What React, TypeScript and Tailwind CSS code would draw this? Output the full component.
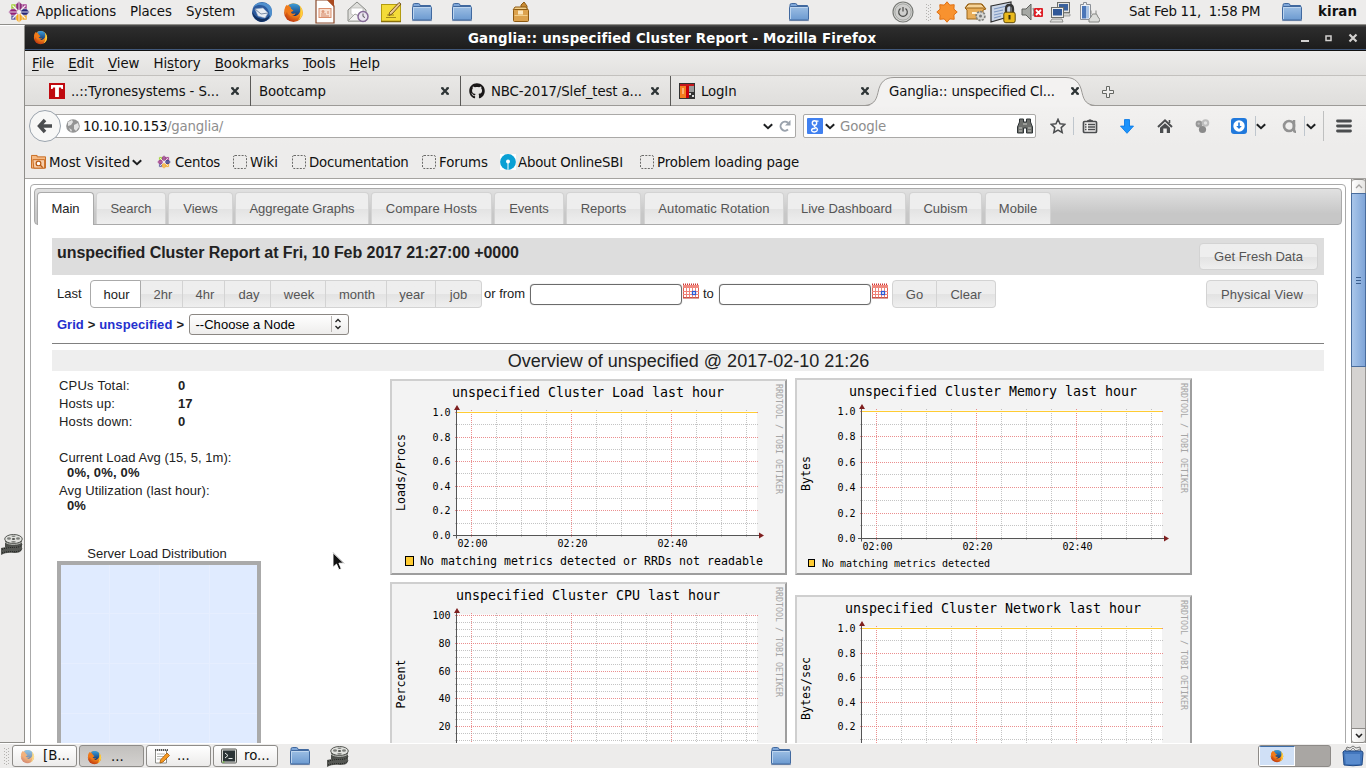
import React from "react";
import { FaGithub } from "react-icons/fa";

type P = { className?: string };

const FirefoxIcon = ({ className = "" }: P) => (
  <svg viewBox="0 0 22 22" className={`shrink-0 ${className}`}>
    <defs>
      <radialGradient id="ffo" cx="0.7" cy="0.2" r="0.95">
        <stop offset="0" stopColor="#ffd83a" />
        <stop offset="0.45" stopColor="#f58a1c" />
        <stop offset="1" stopColor="#b3260c" />
      </radialGradient>
      <linearGradient id="ffb" x1="0" y1="0" x2="0" y2="1">
        <stop offset="0" stopColor="#3d9fdc" />
        <stop offset="1" stopColor="#12346e" />
      </linearGradient>
    </defs>
    <circle cx="11" cy="11.2" r="9.8" fill="url(#ffo)" />
    <path d="M6 3.2C9 0.6 15 0.8 17.6 4.4c1.2 2 1 6-1 7.800-1.700 2.600-5.800 3.400-8 1.600C6.500 12.500 6.300 10.500 7.600 9.500L10.500 9 8 6.800z" fill="url(#ffb)" />
    <path d="M1.600 8C2 5.500 3 4 4.200 3l.6 2c1.500-.4 2.800 0 3.600.8L8 7.500l3 1.200c-.6 1.200-2 1.400-2.600 2.100.4 1.700 3 2 4.800 1.100-1 2.900-4.700 3.400-6.700 1.800C4.500 12.200 4.300 10 4.300 10L2 14z" fill="#f07a1a" />
    <path d="M17.500 4.200c2.500 2.500 3.600 6 2.900 9-.8 3.200-2.600 5.300-5 6.500 2.300-2.700 2.900-5 2.700-7.500.5-2.500.4-5.500-.6-8z" fill="#ffd23c" />
  </svg>
);

const FolderIcon = ({ className = "" }: P) => (
  <svg viewBox="0 0 22 20" className={`h-[20px] w-[22px] shrink-0 ${className}`}>
    <defs>
      <linearGradient id="fold" x1="0" y1="0" x2="0" y2="1">
        <stop offset="0" stopColor="#9dbfe4" />
        <stop offset="1" stopColor="#6c9ad0" />
      </linearGradient>
    </defs>
    <path d="M2 6V3q0-1.500 1.500-1.500h4Q9 1.500 9 3.500h10.500v5H2z" fill="#7ea6d8" stroke="#41699f" />
    <rect x="1.500" y="4.500" width="19" height="13.500" rx="1" fill="url(#fold)" stroke="#41699f" />
    <path d="M2.500 5.500h17M2.500 5.500v11.500" stroke="#c3d9f1" fill="none" strokeWidth=".9" />
    <path d="M1 18.600h20" stroke="#2a4d80" strokeOpacity=".5" />
  </svg>
);

const CentosIcon = ({ className = "" }: P) => (
  <svg viewBox="0 0 22 22" className={`shrink-0 ${className}`}>
    <g stroke="#f5f3f4" strokeWidth=".6">
      <path d="M3 3h7.500v7.500H3z" fill="#9ccd2a" />
      <path d="M11.500 3H19v7.500h-7.500z" fill="#a0368a" />
      <path d="M3 11.500h7.500V19H3z" fill="#5b58a0" />
      <path d="M11.500 11.500H19V19h-7.500z" fill="#efa724" />
      <path d="M11 .3l3.200 3.200v4L11 10.500 7.800 7.500v-4z" fill="#8a2a78" />
      <path d="M21.700 11l-3.200 3.200h-4L11.500 11l3-3.200h4z" fill="#262577" />
      <path d="M11 21.700l-3.200-3.200v-4l3.200-3 3.200 3v4z" fill="#f5a81f" />
      <path d="M.3 11l3.200-3.200h4l3 3.200-3 3.200h-4z" fill="#932279" />
      <path d="M11 .3v21.400M.3 11h21.400" stroke="#f0edf2" strokeWidth=".9" />
      <path d="M4.500 4.500l4.500 4.500M17.500 4.500L13 9M4.500 17.500L9 13M17.500 17.500L13 13" strokeWidth="1.300" />
    </g>
    <path d="M11 8.500l2.500 2.500L11 13.500 8.500 11z" fill="#f3eef3" />
  </svg>
);

const FilmIcon = ({ className = "" }: P) => (
  <svg viewBox="0 0 22 21" className={`h-[21px] w-[22px] shrink-0 ${className}`}>
    <path d="M4 5v8c3 3 14 3 17 0V5z" fill="#4c4e4a" />
    <path d="M0 14c5-1 9-2 13-2 5 0 8-2 8-4v6c0 4-3 5-8 5-6-.5-9 0-13 2z" fill="#555753" />
    <path d="M1 15.300c5-1.800 9-1.800 13-2 4 0 6-1 7-2.800M1 19c5-1.800 9-1.300 13-1.300 3 0 6-1 7-3" fill="none" stroke="#1e1f1d" strokeDasharray="1 1" />
    <ellipse cx="12.500" cy="5" rx="8.800" ry="4.500" fill="#e1e2de" stroke="#555753" />
    <ellipse cx="12.500" cy="5" rx="1.700" ry="1" fill="#555753" />
    <ellipse cx="8" cy="4.500" rx="2" ry="1.200" fill="#7d7f7b" />
    <ellipse cx="17" cy="4.500" rx="2" ry="1.200" fill="#7d7f7b" />
    <ellipse cx="12.500" cy="2.300" rx="2" ry=".8" fill="#7d7f7b" />
    <ellipse cx="12.500" cy="7.800" rx="2.300" ry=".9" fill="#7d7f7b" />
    <path d="M4 8c3 3 13 3.500 17 0" fill="none" stroke="#b9bbb6" />
  </svg>
);

const Chevron = ({ className = "" }: P) => (
  <svg viewBox="0 0 10 7" className={`h-[7px] w-[10px] shrink-0 ${className}`}>
    <path d="M0.800 1.200L5 5.200 9.200 1.200" fill="none" stroke="#1d1f21" strokeWidth="2" />
  </svg>
);

const CloseX = ({ className = "" }: P) => (
  <svg viewBox="0 0 10 10" className={`mt-px h-[10px] w-[10px] shrink-0 ${className}`}>
    <path d="M2 2L8 8M8 2L2 8" stroke="#2e3436" strokeWidth="2.300" />
    <path d="M1 2h2.500M6.500 2H9M1 8h2.500M6.500 8H9" stroke="#2e3436" strokeWidth="1.600" />
  </svg>
);

const Dotted = ({ className = "" }: P) => (
  <svg viewBox="0 0 14 14" className={`h-[14px] w-[14px] shrink-0 ${className}`}>
    <rect x=".5" y=".5" width="13" height="13" rx="1.500" fill="none" stroke="#6a6a68" strokeDasharray="2 1.300" />
  </svg>
);

const Grip = ({ className = "" }: P) => (
  <svg viewBox="0 0 5 17" className={`h-[17px] w-[5px] shrink-0 ${className}`}>
    <path d="M.5 0v17M4.500 0v17M2.500 1v16" stroke="#b5b3b0" strokeDasharray="1 2" />
  </svg>
);

const TopPanel = () => (
  <div className="flex h-[25px] shrink-0 items-center border-b border-[#8f8e8a] bg-[#edeceb]">
    <CentosIcon className="ml-[8px] h-[22px] w-[22px]" />
    <span className="ml-[6px] w-[94px] tracking-[-0.12px]">Applications</span>
    <span className="w-[56px] tracking-[-0.1px]">Places</span>
    <span className="w-[65px] tracking-[-0.1px]">System</span>
    <svg viewBox="0 0 22 22" className="h-[22px] w-[22px] shrink-0">
      <circle cx="11" cy="11" r="10" fill="#2c5a9e" />
      <path d="M2 6C6 0 16 0 20 6c2 5 1 9-2 12C20 11 16 4 9 4 6 4 4 5 2 6z" fill="#4f8fcd" />
      <path d="M4 8l8-1 5 5-3 5-7-2z" fill="#e8edf4" stroke="#98abc4" strokeWidth=".6" />
      <path d="M4 8l6 5 7-1" fill="none" stroke="#7b8da8" />
      <path d="M1 11c1 6 5 9 9 10 5 0 8-3 9-7-3 4-8 5-11 3-4-1-5-4-7-6z" fill="#12305f" />
    </svg>
    <FirefoxIcon className="ml-[10px] h-[21px] w-[21px]" />
    <svg viewBox="0 0 20 24" className="ml-[11px] h-[24px] w-[20px] shrink-0">
      <path d="M1 0h12l6 6v17H1z" fill="#fff" stroke="#8a4a2c" strokeWidth="1.200" />
      <path d="M12 0l7 7V0z" fill="#aa4a20" />
      <rect x="4" y="8.500" width="12" height="9" fill="#f8dfd0" stroke="#d98d6c" />
      <path d="M6 14h5M6 16h8M13 14V11" stroke="#d4886a" />
      <circle cx="8" cy="11.500" r="1.500" fill="#dd9a7c" />
    </svg>
    <svg viewBox="0 0 22 22" className="ml-[12px] h-[22px] w-[22px] shrink-0">
      <path d="M1 9L10 1l9 8v11H1z" fill="#dededb" stroke="#8a8c88" />
      <path d="M4 7h12v6l-6 3-6-3z" fill="#fff" stroke="#b5b5b2" strokeWidth=".7" />
      <path d="M1 20l7-7 2 1 9 6z" fill="#f5f5f4" stroke="#a3a4a0" />
      <circle cx="16" cy="15.500" r="5" fill="#eae4ef" stroke="#856a97" strokeWidth="1.500" />
      <path d="M16 12.500v3l2 1" fill="none" stroke="#555" />
    </svg>
    <svg viewBox="0 0 22 22" className="ml-[11px] h-[22px] w-[22px] shrink-0">
      <rect x="1.500" y="3.500" width="19" height="17" fill="#f4dc39" stroke="#b39c10" />
      <path d="M1 20.500h20" stroke="#886f0a" strokeWidth="1.500" />
      <path d="M7 14h7M6 16.500h10" stroke="#a38b19" />
      <path d="M19 1.500l2 1.500-9 10-3 1.500.5-3z" fill="#e9c78f" stroke="#6b4b13" strokeWidth=".9" />
    </svg>
    <FolderIcon className="ml-[9px]" />
    <FolderIcon className="ml-[18px]" />
    <svg viewBox="0 0 18 22" className="ml-[39px] h-[22px] w-[18px] shrink-0">
      <path d="M9 9V4l3-3 3 4v4" fill="#c88a34" stroke="#8d5a12" />
      <path d="M1 9l2-3h11l2 3z" fill="#f2cf8a" stroke="#8d5a12" />
      <rect x="1.500" y="8.500" width="15" height="12" rx="1" fill="#dca24d" stroke="#8d5a12" />
      <path d="M6 9.500v4h5v-4z" fill="#fbe6bd" />
      <path d="M2.500 14.500h13" stroke="#f2cf8a" />
    </svg>
    <FolderIcon className="ml-[258px]" />
    <svg viewBox="0 0 22 22" className="ml-[82px] h-[22px] w-[22px] shrink-0">
      <circle cx="11" cy="11" r="10" fill="#dcdcda" stroke="#787a76" strokeWidth="1.200" />
      <circle cx="11" cy="11" r="8.200" fill="#cfcfcd" stroke="#a3a5a1" />
      <path d="M8.500 7.500a4.300 4.300 0 1 0 5 0M11 6v4.500" fill="none" stroke="#4a4b49" strokeWidth="1.200" />
    </svg>
    <Grip className="ml-[12px]" />
    <svg viewBox="0 0 22 22" className="ml-[5px] h-[22px] w-[22px] shrink-0">
      <path d="M11 .8l2.800 3.300 4.400-.4-.3 4.400L21.200 11l-3.300 2.900.3 4.400-4.400-.4L11 21.200 8.200 17.900l-4.400.4.3-4.400L.8 11l3.300-2.900-.3-4.400 4.400.4z" fill="#f8922f" stroke="#e07114" />
    </svg>
    <svg viewBox="0 0 23 20" className="ml-[6px] h-[20px] w-[23px] shrink-0">
      <path d="M4 2h14l4 5-3 1v9H3V8L1 6z" fill="#e8ad58" stroke="#9a6418" />
      <path d="M1 6l4-4h12l4 4z" fill="#f6d398" stroke="#9a6418" />
      <path d="M8 10h7v2H8z" fill="#fff2d8" />
      <circle cx="16.500" cy="14" r="4" fill="#d6d7d4" stroke="#7f817d" strokeWidth="2.500" strokeDasharray="2 1" />
      <circle cx="16.500" cy="14" r="3.500" fill="#d6d7d4" />
      <circle cx="16.500" cy="14" r="1.500" fill="#777" />
    </svg>
    <svg viewBox="0 0 26 23" className="ml-[3px] h-[23px] w-[26px] shrink-0">
      <path d="M1 5l20-4v14L1 21z" fill="#cbd6e6" stroke="#2e2e2e" strokeWidth="1.200" />
      <path d="M4 8l13-3M4 11l9-2M4 14l9-2M4 17l7-2" stroke="#7d97c2" strokeWidth="1.100" />
      <path d="M16 12V8q0-4 3.500-4T23 8v4" fill="none" stroke="#353535" strokeWidth="2.300" />
      <rect x="13.800" y="11.200" width="11.400" height="10.500" rx="2" fill="#e9b91c" stroke="#5d4808" />
      <path d="M19.500 14v4.500" stroke="#3c2f05" strokeWidth="2" />
    </svg>
    <svg viewBox="0 0 22 20" className="ml-[5px] h-[20px] w-[22px] shrink-0">
      <path d="M1 7h4l5-5v16l-5-5H1z" fill="#a6a8a4" stroke="#5f615d" />
      <path d="M12 6q2 4 0 8" fill="none" stroke="#8a8c88" strokeWidth="1.300" />
      <rect x="13" y="6" width="9" height="9" rx="1" fill="#dd1f26" />
      <path d="M15 8l5 5M20 8l-5 5" stroke="#fff" strokeWidth="1.800" />
    </svg>
    <svg viewBox="0 0 22 22" className="ml-[6px] h-[22px] w-[22px] shrink-0">
      <rect x="8.500" y="1.500" width="12" height="10" fill="#e4e4e2" stroke="#6d6f6b" />
      <rect x="10" y="3" width="9" height="6.500" fill="#39619d" />
      <path d="M12 15h9v-2l-2-1h-5z" fill="#d4d5d2" stroke="#8b8d89" strokeWidth=".7" />
      <rect x="2.500" y="6.500" width="12" height="10" fill="#eeeeec" stroke="#6d6f6b" />
      <rect x="4" y="8" width="9" height="6.500" fill="#2f5797" />
      <path d="M1 21h13l-1-3H3z" fill="#dedfdc" stroke="#7d7f7b" strokeWidth=".8" />
    </svg>
    <svg viewBox="0 0 22 22" className="ml-[7px] h-[22px] w-[22px] shrink-0">
      <path d="M2.500 3.500h3v-2h3v2h4v15h-10z" fill="#eef1f5" stroke="#8c9097" />
      <rect x="4" y="5" width="4" height="12.500" fill="#4a76b8" />
      <rect x="8" y="5" width="3" height="12.500" fill="#a9c3e4" />
      <path d="M13 13V9.500M18 13V9.500M11 21q-1-3 2-5l1.500-3h4l1.500 3q3 2 1 5z" fill="#dddedb" stroke="#858783" />
    </svg>
    <span className="ml-[29px] w-[152px] whitespace-pre tracking-[-0.3px]">Sat Feb 11,  1:58 PM</span>
    <FolderIcon />
    <span className="ml-[15px] font-bold tracking-[0.1px]">kiran</span>
  </div>
);

const TitleBar = () => (
  <div className="flex h-[26px] shrink-0 items-center border-b border-[#111] bg-linear-to-b from-[#50504f] via-[#2d2d2d] via-10% to-[#1c1c1c] shadow-[inset_0_-1px_0_#41587a]">
    <FirefoxIcon className="ml-[8px] h-[15px] w-[15px]" />
    <span className="ml-[420px] mt-[2px] w-[832px] font-bold tracking-[0.18px] text-white">Ganglia:: unspecified Cluster Report - Mozilla Firefox</span>
    <svg viewBox="0 0 58 12" className="h-[12px] w-[58px] shrink-0">
      <path d="M1 9h8" stroke="#d3d1cf" strokeWidth="2" />
      <rect x="26" y="4" width="5" height="4.500" fill="none" stroke="#d3d1cf" strokeWidth="1.500" />
      <path d="M49.500 2.500l7 7M56.500 2.500l-7 7" stroke="#d3d1cf" strokeWidth="2.200" />
    </svg>
  </div>
);

const menus = [["F", "ile", ""], ["E", "dit", ""], ["V", "iew", ""], ["s", "tory", "Hi"], ["B", "ookmarks", ""], ["T", "ools", ""], ["H", "elp", ""]];

const MenuBar = () => (
  <div className="flex h-[25px] shrink-0 items-center gap-[14px] border-b border-[#c3c1be] bg-linear-to-b from-[#edeceb] to-[#e3e2e0] pl-[7px] tracking-[-0.03px] [&>span]:mt-[2px]">
    {menus.map(([u, rest, pre]) => (
      <span key={pre + u + rest}>
        {pre}
        <span className="underline decoration-1 underline-offset-2">{u}</span>
        {rest}
      </span>
    ))}
  </div>
);

const TabStrip = () => (
  <div className="relative flex h-[30px] shrink-0 items-center border-b border-[#9c9a97] bg-linear-to-b from-[#e9e8e6] to-[#dfdedc]">
    <div className="flex h-[30px] w-[226px] items-center border-r border-[#5b5a58] pl-[24px]">
      <svg viewBox="0 0 16 16" className="h-[16px] w-[16px] shrink-0">
        <path d="M0 0h16v16H0z" fill="#c00a10" />
        <path d="M2 2h12v4h-1.500l-.7-1.500H9.900V14H6.100V4.500H4.200L3.500 6H2z" fill="#fff" />
      </svg>
      <span className="ml-[6px] mt-[2px] w-[159px] tracking-[-0.12px]">..::Tyronesystems - S...</span>
      <CloseX />
    </div>
    <div className="flex h-[30px] w-[210px] items-center border-r border-[#5b5a58] pl-[8px]">
      <span className="mt-[2px] w-[181px] tracking-[-0.1px]">Bootcamp</span>
      <CloseX />
    </div>
    <div className="flex h-[30px] w-[210px] items-center border-r border-[#5b5a58] pl-[8px]">
      <FaGithub className="h-[16px] w-[16px] shrink-0 text-[#191717]" />
      <span className="ml-[6px] mt-[2px] w-[159px] tracking-[-0.13px]">NBC-2017/Slef_test a...</span>
      <CloseX />
    </div>
    <div className="flex h-[30px] w-[200px] items-center pl-[8px]">
      <svg viewBox="0 0 16 16" className="h-[16px] w-[16px] shrink-0">
        <path d="M0 0h16v16H0z" fill="#333" />
        <path d="M1 1h14v3H1z" fill="#c4161c" />
        <path d="M1 3h6v12H1z" fill="#f47d20" />
        <path d="M3 5h2v6H3z" fill="#ffb071" />
        <path d="M7 3h3v12H7z" fill="#c9000b" />
        <path d="M10 3h5v6h-5z" fill="#9b9b9b" />
        <path d="M10 10h2v2h-2zM13 12h2v2h-2z" fill="#ddd" />
      </svg>
      <span className="ml-[6px] mt-[2px] w-[159px] tracking-[-0.15px]">LogIn</span>
      <CloseX />
    </div>
    <div className="flex h-[30px] items-center pl-[18px]">
      <span className="z-10 mt-[2px] w-[181px] tracking-[-0.18px]">Ganglia:: unspecified Cl...</span>
      <CloseX className="z-10" />
    </div>
    <svg viewBox="0 0 12 12" className="ml-[22px] mt-[2px] h-[12px] w-[12px] shrink-0">
      <path d="M4.500 .5h3v4h4v3h-4v4h-3v-4h-4v-3h4z" fill="#f0efee" stroke="#666864" />
    </svg>
    <svg viewBox="0 0 240 31" className="absolute left-[838px] top-[0px] h-[31px] w-[240px]">
      <path d="M2 30.500c8-1 11-5 13-14C17 6 22 1.500 31 1.500H203c9 0 14 5 16 15 2 9 5 13 13 14z" fill="#f3f2f1" />
      <path d="M2 29.500c8-1 11-4 13-13C17 6 22 1.500 31 1.500H203c9 0 14 5 16 15 2 9 5 12 13 13" fill="none" stroke="#9c9a97" />
    </svg>
  </div>
);

const NavBar = () => (
  <div className="flex h-[40px] shrink-0 items-center bg-linear-to-b from-[#f2f1f0] to-[#edeceb]">
    <svg viewBox="0 0 32 32" className="z-10 ml-[4px] h-[32px] w-[32px] shrink-0">
      <circle cx="16" cy="16" r="15.500" fill="#f7f7f6" stroke="#9aa3ad" />
      <path d="M10.500 16H23M16 10L10.500 16l5.500 6" fill="none" stroke="#4b4d4f" strokeWidth="3.500" />
    </svg>
    <div className="-ml-[14px] flex h-[24px] w-[749px] items-center rounded-[2px] border border-[#aaa9a7] bg-white pl-[18px]">
      <svg viewBox="0 0 14 14" className="h-[14px] w-[14px] shrink-0">
        <circle cx="7" cy="7" r="6.800" fill="#949494" />
        <path d="M2 3l4-2 1 2-2 3-3 1zM8 6l4-2 1 4-3 4-2-2zM3 9l3 2-1 2z" fill="#e3e3e3" />
      </svg>
      <span className="ml-[3px] mt-[2px] w-[680px] tracking-[-0.42px]">
        10.10.10.153<span className="tracking-[-0.22px] text-[#8e8e8e]">/ganglia/</span>
      </span>
      <Chevron />
      <svg viewBox="0 0 12 12" className="ml-[6px] h-[12px] w-[12px] shrink-0">
        <path d="M9 9.600A4.500 4.500 0 1 1 9 2.800" fill="none" stroke="#9aa2ac" strokeWidth="2" />
        <path d="M11.500 0v5.500H6z" fill="#9aa2ac" />
      </svg>
    </div>
    <div className="ml-[7px] flex h-[24px] w-[233px] items-center rounded-[2px] border border-[#aaa9a7] bg-white pl-[3px]">
      <svg viewBox="0 0 16 16" className="h-[16px] w-[16px] shrink-0">
        <rect width="16" height="16" rx="1" fill="#4080f0" />
        <circle cx="7.500" cy="5" r="2.200" fill="none" stroke="#fff" strokeWidth="1.400" />
        <path d="M9 3.200h2.500M8 7.500c-2 1 .8 1.800 2 3 1.500 2-1 3.700-3 3.500-3-.2-3.300-3-.5-3.500h2" fill="none" stroke="#fff" strokeWidth="1.300" />
      </svg>
      <Chevron className="ml-[2px]" />
      <span className="ml-[5px] mt-[2px] w-[177px] tracking-[-0.15px] text-[#8e8e8e]">Google</span>
      <svg viewBox="0 0 16 16" className="h-[16px] w-[16px] shrink-0">
        <path d="M2.500 1h4v3h3V1h4v3l2 5v6h-6v-5h-3v5h-6V9l2-5z" fill="#6e706d" stroke="#2e3436" />
        <path d="M2 10h3M11 10h3M2 13h3M11 13h3M6 6h4" stroke="#c9cbc7" />
      </svg>
    </div>
    <svg viewBox="0 0 16 16" className="ml-[14px] h-[16px] w-[16px] shrink-0">
      <path d="M8 1.300l2 4.500 4.800.5-3.600 3.300 1 4.900L8 12l-4.200 2.500 1-4.900L1.200 6.300 6 5.800z" fill="#f3f2f1" stroke="#4b4d4f" strokeWidth="1.500" />
    </svg>
    <div className="ml-[7px] h-[18px] w-px bg-[#bfc6cd]" />
    <svg viewBox="0 0 16 16" className="ml-[8px] h-[16px] w-[16px] shrink-0">
      <path d="M5 3h1.500a1.600 1.600 0 0 1 3 0H11" fill="#4b4d4f" stroke="#4b4d4f" strokeWidth="1.500" />
      <rect x="1.500" y="3.500" width="13" height="11" rx="1" fill="#f3f2f1" stroke="#4b4d4f" strokeWidth="1.700" />
      <path d="M3 6.500h1.500M6 6.500h7M3 9h1.500M6 9h7M3 11.500h1.500M6 11.500h7" stroke="#4b4d4f" strokeWidth="1.400" />
    </svg>
    <svg viewBox="0 0 14 15" className="ml-[22px] h-[15px] w-[14px] shrink-0">
      <path d="M4.500 .6h5v6.500h4L7 14.300.5 7.100h4z" fill="#1c93fb" stroke="#0a7ae6" strokeWidth=".9" />
    </svg>
    <svg viewBox="0 0 16 16" className="ml-[23px] h-[16px] w-[16px] shrink-0">
      <path d="M1 9l7-6.700L15 9" fill="none" stroke="#4b4d4f" strokeWidth="2" />
      <path d="M3 9.800l5-4.600 5 4.600V15H9.800v-4.500H6.300V15H3z" fill="#4b4d4f" />
      <path d="M11.700 2h1.600v3h-1.600z" fill="#4b4d4f" />
    </svg>
    <svg viewBox="0 0 15 15" className="ml-[22px] h-[15px] w-[15px] shrink-0">
      <circle cx="4" cy="5" r="3.400" fill="#979797" />
      <circle cx="10.500" cy="4" r="3.800" fill="#bdbdbd" />
      <circle cx="10.500" cy="4" r="1.700" fill="#e2e2e2" />
      <circle cx="7.500" cy="10.500" r="3.600" fill="#8a8a8a" />
      <circle cx="3.700" cy="4.600" r="1.200" fill="#bbb" />
    </svg>
    <svg viewBox="0 0 16 16" className="ml-[21px] h-[16px] w-[16px] shrink-0">
      <rect width="16" height="16" rx="3" fill="#2179dc" />
      <circle cx="8" cy="8" r="5.700" fill="#fff" />
      <path d="M7.200 4.500h1.600V8h2L8 11 5.200 8h2z" fill="#2179dc" />
    </svg>
    <div className="ml-[8px] h-[20px] w-px bg-[#bfc6cd]" />
    <Chevron />
    <svg viewBox="0 0 16 14" className="ml-[16px] h-[14px] w-[16px] shrink-0">
      <circle cx="7" cy="7" r="5" fill="none" stroke="#929292" strokeWidth="2.600" />
      <path d="M12 1v10.500q0 1.300 2 1.300" fill="none" stroke="#929292" strokeWidth="2.500" />
    </svg>
    <div className="ml-[6px] h-[20px] w-px bg-[#bfc6cd]" />
    <Chevron className="ml-px" />
    <div className="ml-[7px] h-[30px] w-px bg-[#bfc0c0]" />
    <svg viewBox="0 0 16 14" className="ml-[12px] h-[14px] w-[16px] shrink-0">
      <path d="M1.500 2h13M1.500 7h13M1.500 12h13" stroke="#4b4d4f" strokeWidth="2.800" strokeLinecap="round" />
    </svg>
  </div>
);

const BookmarksBar = () => (
  <div className="flex h-[33px] shrink-0 items-center border-b border-[#a5a3a0] bg-[#edeceb] [&>span]:mt-[2px]">
    <svg viewBox="0 0 16 16" className="ml-[6px] h-[16px] w-[15px] shrink-0">
      <path d="M.5 2.500V1h6v1.500h9v12H.5z" fill="#f5b983" stroke="#c5671c" />
      <path d="M3 14.500L2 5.500h12.500v9z" fill="#f7ceaa" stroke="#c5671c" />
      <circle cx="8" cy="9.500" r="2.500" fill="#fff" stroke="#b85a12" strokeWidth="1.300" />
      <path d="M10 11.500l2.500 2.500" stroke="#b85a12" strokeWidth="1.500" />
    </svg>
    <span className="ml-[3px] w-[83px]">Most Visited</span>
    <Chevron />
    <CentosIcon className="ml-[15px] h-[14px] w-[14px]" />
    <span className="ml-[4px] w-[58px] tracking-[-0.2px]">Centos</span>
    <Dotted />
    <span className="ml-[3px] w-[42px]">Wiki</span>
    <Dotted />
    <span className="ml-[3px] w-[113px] tracking-[-0.25px]">Documentation</span>
    <Dotted />
    <span className="ml-[3px] w-[61px] tracking-[-0.05px]">Forums</span>
    <svg viewBox="0 0 16 16" className="h-[16px] w-[16px] shrink-0">
      <path d="M0 0h16v16H0z" fill="#fff" />
      <circle cx="8" cy="8" r="7.900" fill="#0aa0d4" />
      <circle cx="8" cy="7.500" r="2" fill="#fff" />
      <path d="M7.500 8h1v8h-1z" fill="#fff" />
    </svg>
    <span className="ml-[2px] w-[122px] tracking-[-0.22px]">About OnlineSBI</span>
    <Dotted />
    <span className="ml-[3px] tracking-[-0.16px]">Problem loading page</span>
  </div>
);

const btn = "flex items-center justify-center border border-[#d3d3d3] bg-linear-to-b from-[#eeeeee] from-50% via-[#e3e3e3] via-52% to-[#efefef] text-[#555]";

const pageTabs = [
  ["Search", "w-[70px] ml-[2px]"], ["Views", "w-[65px] ml-[2px]"], ["Aggregate Graphs", "w-[134px] ml-[2px] tracking-[-0.08px]"],
  ["Compare Hosts", "w-[121px] ml-[2px] tracking-[0.08px]"], ["Events", "w-[70px] ml-[2px]"], ["Reports", "w-[75px] ml-[2px]"],
  ["Automatic Rotation", "w-[140px] ml-[3px] tracking-[0.08px]"], ["Live Dashboard", "w-[119px] ml-[3px]"], ["Cubism", "w-[73px] ml-[3px]"],
  ["Mobile", "w-[66px] ml-[3px]"],
];

const ranges = [
  ["2hr", "w-[42px] pl-[3px]"], ["4hr", "w-[42px] pl-[3px]"], ["day", "w-[46px] pl-[3px]"], ["week", "w-[55px] pl-[2px]"],
  ["month", "w-[61px] pl-[2px]"], ["year", "w-[49px] pl-[2px]"], ["job", "w-[46px] rounded-r-[4px]"],
];

const Calendar = () => (
  <svg viewBox="0 0 16 16" className="mb-[6px] ml-px h-[16px] w-[16px] shrink-0">
    <path d="M0 1.500h16" stroke="#c33" strokeWidth="2" strokeDasharray="1 1" />
    <rect x=".5" y="2.500" width="15" height="12" fill="#fff" stroke="#e06052" />
    <path d="M0 2h16v3H0z" fill="#f08a80" />
    <path d="M3.500 5v10M6.500 5v10M9.500 5v10M12.500 5v10M0 8.500h16M0 11.500h16" stroke="#ef8379" />
    <path d="M0 15h16" stroke="#b74238" />
    <rect x="9.500" y="8.500" width="3" height="3" fill="#fff" stroke="#2a5ad7" strokeWidth="1.300" />
  </svg>
);

type Line = [number, string?];
type ChartProps = {
  top: number; height: number; title: string; titleY: number; yLabel: string; yMid: number;
  lines: Line[]; baseY: number; markY: number; series?: boolean; timeY?: number; legend?: { text: string; x: number; y: number; size: number; adv: number; box: number };
  className?: string;
};

const mono = '"DejaVu Sans Mono", monospace';

const Chart = ({ top, height, title, titleY, yLabel, yMid, lines, baseY, markY, series, timeY, legend, className = "" }: ChartProps) => {
  const y0 = lines[0][0];
  const cols = Array.from({ length: 12 }, (_, i) => 471.5 + i * 25);
  return (
    <svg viewBox={`390 ${top} 397 ${height}`} width="397" height={height} className={`block shrink-0 ${className}`} fontFamily={mono}>
      <rect x="390" y={top} width="397" height={height} fill="#f3f3f3" />
      <path d={`M390 ${top + height}V${top}H787l-2 2H392V${top + height - 2}z`} fill="#cfcfcf" />
      <path d={`M787 ${top}V${top + height}H390l2-2H785V${top + 2}z`} fill="#9e9e9e" />
      <rect x="457" y={y0 - 1} width="300" height={baseY - y0 + 1} fill="#fff" />
      {cols.map((x, i) => (
        <path key={x} d={`M${x} ${y0 - 2.5}V${baseY + 2}`} stroke={i % 4 === 0 ? "#e46a6a" : "#9c9c9c"} strokeOpacity={i % 4 === 0 ? 0.75 : 0.6} strokeDasharray="1 1" />
      ))}
      {lines.map(([y, label]) => (
        <g key={y}>
          <path d={`M455 ${y}H759`} stroke={label ? "#e46a6a" : "#9c9c9c"} strokeOpacity={label ? 0.75 : 0.6} strokeDasharray="1 1" />
          {label && <text x="450.500" y={y + 3.500} textAnchor="end" fontSize="10" textLength={label.length * 6}>{label}</text>}
        </g>
      ))}
      {series && <path d={`M457 ${y0}H757`} stroke="#ffcc33" />}
      <path d={`M456.500 ${y0 - 3}V${baseY + 3}M453 ${baseY}H760`} stroke="#555" />
      <path d={`M454 ${y0 - 2.500}h6l-3-5z`} fill="#7f1f1f" />
      <path d={`M759 ${baseY - 3}v6l5-3z`} fill="#7f1f1f" />
      <text x={588 - title.length * 4} y={titleY} fontSize="13.300" textLength={title.length * 8}>{title}</text>
      <text transform={`translate(404.500 ${yMid + yLabel.length * 3.500}) rotate(-90)`} fontSize="11.600" textLength={yLabel.length * 7}>{yLabel}</text>
      <text transform={`translate(776 ${markY}) rotate(90)`} fontSize="8.300" textLength="110" fill="#a5a5a5">RRDTOOL / TOBI OETIKER</text>
      {timeY && ["02:00", "02:20", "02:40"].map((t, i) => (
        <text key={t} x={457.5 + i * 100} y={timeY} fontSize="10" textLength="30">{t}</text>
      ))}
      {legend && (
        <g>
          <rect x={legend.x - 14.5 + (legend.box === 7 ? 1 : 0)} y={legend.y - 8.500 + (legend.box === 7 ? 1 : 0)} width={legend.box - 1} height={legend.box} fill="#ffcc33" stroke="#000" />
          <text x={legend.x} y={legend.y} fontSize={legend.size} textLength={legend.text.length * legend.adv}>{legend.text}</text>
        </g>
      )}
    </svg>
  );
};

const cpuLines: Line[] = [
  [615.5, "100"], [622.5], [629.5], [636.5], [643.5, "80"], [650.5], [657.5], [664.5], [671.5, "60"], [678.5], [684.5], [691.5],
  [698.5, "40"], [705.5], [712.5], [719.5], [726.5, "20"], [733.5], [740.5],
];

const Page = () => (
  <div className="flex h-[564px] overflow-hidden bg-white font-['Liberation_Sans',Arial,sans-serif] text-[13px] text-[#222]">
    <div className="h-[564px] w-[1326px] shrink-0 overflow-hidden pl-[5px] pt-[5px]">
      <div className="h-[620px] w-[1316px] rounded-[4px] border border-[#aaa] p-[3px]">
        <div className="flex h-[37px] items-end rounded-[4px] border border-[#aaa] bg-linear-to-b from-[#e1e1e1] to-[#c7c7c7] to-70% pl-[2px]">
          <div className="-mb-px flex h-[33px] w-[57px] items-center justify-center rounded-t-[4px] border border-b-0 border-[#aaa] bg-white text-[#212121]">Main</div>
          {pageTabs.map(([t, c]) => (
            <div key={t} className={`${btn} h-[32px] rounded-t-[4px] border-b-0 ${c}`}>{t}</div>
          ))}
        </div>
        <div className="mx-[18px] mt-[13px]">
          <div className="flex h-[37px] justify-between bg-[#ddd] pl-[5px] pr-[6px]">
            <span className="mt-[4px] text-[16px] font-bold leading-[22px] tracking-[-0.06px]">unspecified Cluster Report at Fri, 10 Feb 2017 21:27:00 +0000</span>
            <div className={`${btn} mt-[5px] h-[27px] w-[119px] rounded-[4px]`}>Get Fresh Data</div>
          </div>
          <div className="mt-[5px] flex h-[28px] items-center pl-[5px]">
            <span className="w-[33px]">Last</span>
            <div className="flex h-[28px] w-[51px] items-center justify-center rounded-l-[4px] border border-[#aaa] bg-white pl-[2px] pt-[2px] text-[#212121]">hour</div>
            {ranges.map(([t, c]) => (
              <div key={t} className={`${btn} h-[28px] border-l-0 pt-[2px] ${c}`}>{t}</div>
            ))}
            <span className="ml-[2px] w-[46px]">or from</span>
            <div className="h-[21px] w-[152px] rounded-[4px] border border-[#6b6b6b] bg-white shadow-[0_0_1px_#999]" />
            <Calendar />
            <span className="ml-[4px] w-[16px]">to</span>
            <div className="h-[21px] w-[152px] rounded-[4px] border border-[#6b6b6b] bg-white shadow-[0_0_1px_#999]" />
            <Calendar />
            <div className={`${btn} ml-[4px] h-[28px] w-[45px] rounded-l-[4px] pt-[2px]`}>Go</div>
            <div className={`${btn} h-[28px] w-[59px] rounded-r-[4px] border-l-0 pt-[2px]`}>Clear</div>
            <div className={`${btn} ml-auto mr-[6px] h-[28px] w-[112px] rounded-[4px] pt-[2px] tracking-[0.15px]`}>Physical View</div>
          </div>
          <div className="mt-[5px] flex h-[22px] items-center pl-[5px] font-bold [&>span]:mt-[2px]">
            <span className="text-[#2430ce]">Grid</span>
            <span className="ml-[4px]">&gt;</span>
            <span className="ml-[4px] tracking-[0.08px] text-[#2430ce]">unspecified</span>
            <span className="ml-[4px] w-[13px]">&gt;</span>
            <div className="flex h-[21px] w-[160px] items-center justify-between rounded-[3px] border border-[#8b8783] bg-linear-to-b from-white to-[#eeedec] pl-[5px] pr-[6px] font-normal text-black">
              <span className="mt-[2px] w-[134px] tracking-[0.04px]">--Choose a Node</span>
              <div className="h-[16px] w-px bg-[#b9b6b3]" />
              <svg viewBox="0 0 8 12" className="h-[12px] w-[8px] shrink-0">
                <path d="M1.500 4L4 1.500 6.500 4M1.500 8L4 10.500 6.500 8" fill="none" stroke="#222" strokeWidth="1.300" />
              </svg>
            </div>
          </div>
          <div className="mt-[8px] h-px bg-[#808080]" />
          <div className="mt-[6px] h-[21px] bg-[#eee] pl-px text-center text-[18px] leading-[22px]">Overview of unspecified @ 2017-02-10 21:26</div>
          <div className="mt-[7px] flex">
            <div className="-mt-px w-[338px] shrink-0 pl-[5px]">
              <div className="pl-[2px] leading-[18px]">
                <div className="flex"><span className="w-[119px] tracking-[0.22px]">CPUs Total:</span><b>0</b></div>
                <div className="flex"><span className="w-[119px] tracking-[0.12px]">Hosts up:</span><b>17</b></div>
                <div className="flex"><span className="w-[119px] tracking-[0.18px]">Hosts down:</span><b>0</b></div>
                <div className="mt-[19px] leading-[15px] tracking-[0.05px]">Current Load Avg (15, 5, 1m):</div>
                <div className="pl-[8px] font-bold leading-[15px] tracking-[0.18px]">0%, 0%, 0%</div>
                <div className="mt-[3px] leading-[15px] tracking-[0.1px]">Avg Utilization (last hour):</div>
                <div className="pl-[8px] font-bold leading-[15px]">0%</div>
              </div>
              <div className="mt-[33px] w-[200px] text-center leading-[15px]">Server Load Distribution</div>
              <svg viewBox="0 0 204 204" className="block h-[204px] w-[204px]">
                <rect x="2" y="2" width="200" height="200" fill="#e0ebff" stroke="#aaa" strokeWidth="4" />
                <path d="M4 52.500h196M4 102.500h196M4 152.500h196M52.500 4v196M102.500 4v196M152.500 4v196" stroke="#e6eeff" />
              </svg>
            </div>
            <div className="w-[405px] shrink-0 pt-px">
              <Chart top={379} height={196} title="unspecified Cluster Load last hour" titleY={397} yLabel="Loads/Procs" yMid={472.5} markY={384} baseY={535.5} timeY={547} series
                lines={[[412.5, "1.0"], [424.5], [437.5, "0.8"], [449.5], [461.5, "0.6"], [473.5], [486.5, "0.4"], [498.5], [510.5, "0.2"], [523.5], [535.5, "0.0"]]}
                legend={{ text: "No matching metrics detected or RRDs not readable", x: 420, y: 565, size: 11.6, adv: 7, box: 9 }} />
              <Chart className="mt-[7px]" top={582} height={196} title="unspecified Cluster CPU last hour" titleY={600} yLabel="Percent" yMid={684} markY={587} baseY={754.5} lines={cpuLines} />
            </div>
            <div className="w-[397px] shrink-0">
              <Chart top={378} height={197} title="unspecified Cluster Memory last hour" titleY={396} yLabel="Bytes" yMid={473.5} markY={383} baseY={538.5} timeY={550} series
                lines={[[411.5, "1.0"], [424.5], [436.5, "0.8"], [449.5], [462.5, "0.6"], [474.5], [487.5, "0.4"], [500.5], [513.5, "0.2"], [525.5], [538.5, "0.0"]]}
                legend={{ text: "No matching metrics detected", x: 417, y: 567, size: 10, adv: 6, box: 7 }} />
              <Chart className="mt-[20px]" top={595} height={196} title="unspecified Cluster Network last hour" titleY={613} yLabel="Bytes/sec" yMid={688.5} markY={600} baseY={751.5} series
                lines={[[628.5, "1.0"], [640.5], [653.5, "0.8"], [665.5], [677.5, "0.6"], [689.5], [702.5, "0.4"], [714.5], [726.5, "0.2"], [739.5]]} />
            </div>
          </div>
        </div>
      </div>
    </div>
    <div className="flex h-[564px] w-[15px] shrink-0 flex-col border-x border-[#979592] bg-[#d5d3d1]">
      <div className="flex h-[14px] items-center justify-center rounded-t-[3px] border-t border-[#8d8b88] bg-linear-to-r from-white to-[#e5e4e2]">
        <svg viewBox="0 0 8 5" className="h-[5px] w-[8px]"><path d="M1 4l3-3 3 3" fill="none" stroke="#a3a19f" strokeWidth="1.300" /></svg>
      </div>
      <div className="-mx-px flex h-[174px] flex-col items-center justify-center gap-[2px] border border-[#4a6d9d] bg-linear-to-r from-[#a9c6ea] to-[#7fa5d8]">
        <div className="h-px w-[5px] bg-[#3b5f90]" />
        <div className="h-px w-[5px] bg-[#3b5f90]" />
        <div className="h-px w-[5px] bg-[#3b5f90]" />
      </div>
      <div className="-mx-px mt-auto flex h-[15px] items-center justify-center rounded-b-[3px] border border-[#8d8b88] bg-linear-to-r from-white to-[#e5e4e2]">
        <svg viewBox="0 0 8 5" className="h-[5px] w-[8px]"><path d="M1 1l3 3 3-3" fill="none" stroke="#222" strokeWidth="1.600" /></svg>
      </div>
    </div>
  </div>
);

const task = "flex h-[22px] w-[65px] shrink-0 items-center rounded-[3px] border border-[#8e8c89] pl-[7px]";

const BottomPanel = () => (
  <div className="flex h-[24px] shrink-0 items-center bg-[#edeceb]">
    <Grip className="ml-[4px]" />
    <div className={`${task} ml-[3px] bg-linear-to-b from-white to-[#ecebea]`}>
      <FirefoxIcon className="h-[15px] w-[15px] opacity-55" />
      <span className="ml-[8px]">[B...</span>
    </div>
    <div className={`${task} ml-[2px] bg-linear-to-b from-[#c2c0bd] to-[#d3d1cf]`}>
      <FirefoxIcon className="mt-[2px] h-[15px] w-[15px]" />
      <span className="ml-[9px] mt-[2px]">...</span>
    </div>
    <div className={`${task} ml-[2px] bg-linear-to-b from-white to-[#ecebea]`}>
      <svg viewBox="0 0 16 16" className="h-[16px] w-[16px] shrink-0">
        <path d="M1.500 2h11v13h-11z" fill="#fff" stroke="#8a8c88" />
        <path d="M1 2h13" stroke="#555" strokeWidth="2" strokeDasharray="1 1" />
        <path d="M3 6h8M3 8.500h7M3 11h5" stroke="#b3b5b1" />
        <path d="M13 5l2.500 2.500L9 14l-3 1 .5-3z" fill="#f79a22" stroke="#a55a08" strokeWidth=".8" />
      </svg>
      <span className="ml-[7px]">...</span>
    </div>
    <div className={`${task} ml-[2px] bg-linear-to-b from-white to-[#ecebea]`}>
      <svg viewBox="0 0 16 16" className="h-[16px] w-[16px] shrink-0">
        <rect x=".5" y="1" width="15" height="14" rx="1" fill="#d8d9d5" stroke="#5b5d59" />
        <rect x="2" y="2.500" width="12" height="11" fill="#2b3436" />
        <path d="M4 5l3 2.500L4 10M7.500 10.500h4" fill="none" stroke="#e8ece9" />
        <path d="M1.500 14h2" stroke="#5dbd21" />
      </svg>
      <span className="ml-[7px]">ro...</span>
    </div>
    <FolderIcon className="ml-[11px]" />
    <FilmIcon className="ml-[16px]" />
    <FolderIcon className="ml-[421px]" />
    <div className="ml-[466px] flex h-[22px] w-[73px] overflow-hidden rounded-[3px] border border-[#8d8a87] bg-[#a9a6a3]">
      <div className="flex w-[36px] items-center justify-center border border-white border-t-[#3d6da8] bg-[#d0e0f6]">
        <FirefoxIcon className="h-[14px] w-[14px]" />
      </div>
    </div>
    <svg viewBox="0 0 22 22" className="ml-[11px] h-[22px] w-[22px] shrink-0">
      <path d="M3 7l2-5 3 1 3-2 3 2 4-1 1 5z" fill="#e9e9e8" stroke="#777" />
      <path d="M5 4l3 2 3-3 3 3 4-2" fill="none" stroke="#888" />
      <path d="M1 7q1-2 3-1h15q2 0 2 2l-1 12q-9 1.500-18 0z" fill="#4377bd" stroke="#1f4884" />
      <path d="M3 9h15v10H4z" fill="#6a9bd8" opacity=".6" />
    </svg>
  </div>
);

export default function App() {
  return (
    <div className="relative flex h-[768px] w-[1366px] flex-col overflow-hidden whitespace-nowrap bg-[#edeceb] font-['DejaVu_Sans',sans-serif] text-[13.33px] leading-[16px] text-[#111]">
      <TopPanel />
      <div className="flex h-[718px] shrink-0">
        <div className="flex h-[718px] w-[25px] shrink-0 flex-col border-b border-r border-t border-[#8f8e8a] border-t-white pl-px pt-[508px]">
          <FilmIcon />
        </div>
        <div className="flex w-[1341px] flex-col">
          <TitleBar />
          <MenuBar />
          <TabStrip />
          <NavBar />
          <BookmarksBar />
          <Page />
        </div>
      </div>
      <div className="h-px shrink-0 bg-white" />
      <BottomPanel />
      <svg viewBox="0 0 13 20" className="absolute left-[332px] top-[552px] h-[20px] w-[13px]">
        <path d="M1 .8v14.500l3.500-3.200 2.400 5.600 2.400-1-2.400-5.500h4.900z" fill="#111" stroke="#fff" strokeWidth=".9" />
        <path d="M.5 0l12 11.500" stroke="#999" strokeWidth=".5" />
      </svg>
    </div>
  );
}
